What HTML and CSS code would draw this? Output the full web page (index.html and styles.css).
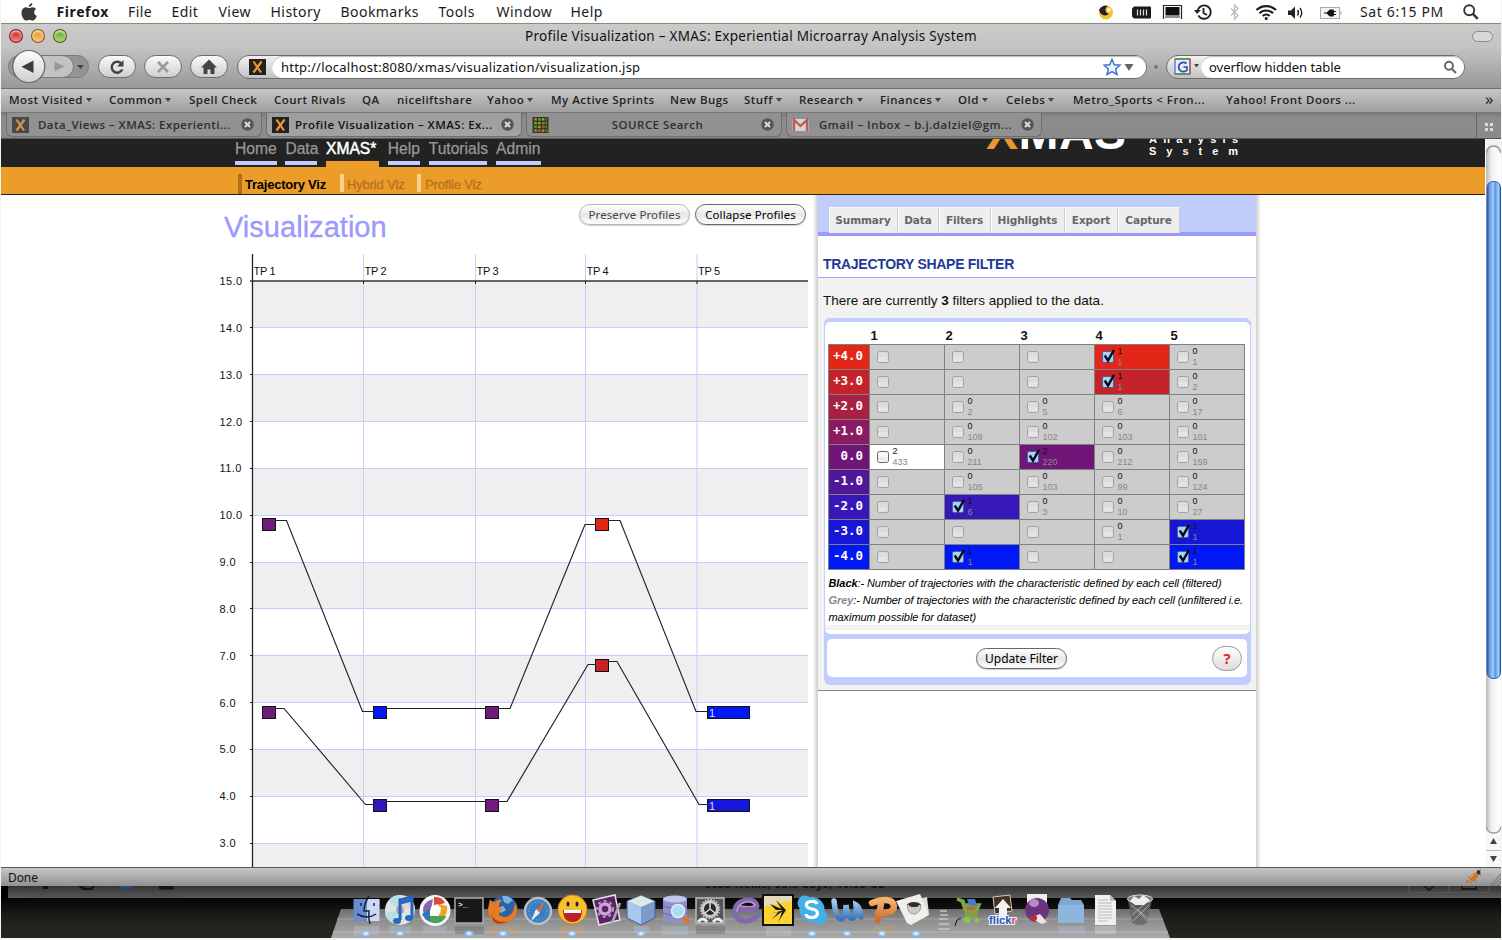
FILE: index.html
```html
<!DOCTYPE html>
<html lang="en">
<head>
<meta charset="utf-8">
<title>Profile Visualization – XMAS: Experiential Microarray Analysis System</title>
<link rel="stylesheet" href="styles.css">
</head>
<body>
<svg width="0" height="0" class="defs">
  <defs>
    <symbol id="closer" viewBox="0 0 13 13"><circle cx="6.5" cy="6.5" r="6.2" fill="#555"/><path d="M4 4l5 5M9 4l-5 5" stroke="#ddd" stroke-width="2"/></symbol>
    <symbol id="xicon" viewBox="0 0 17 16"><rect width="17" height="16" fill="#222"/><path d="M4.5 2.5l7.500 11M12.500 2.500l-8 11" stroke="#f0992a" stroke-width="2.200" fill="none"/></symbol>
    <symbol id="box" viewBox="0 0 18 16"><rect x="1.500" y="2.500" width="11" height="11" rx="2" fill="#dcdcdc" stroke="#a2a2a2"/><path d="M2.500 8h9v4.500h-9z" fill="#e4e4e4"/></symbol>
    <symbol id="boxon" viewBox="0 0 18 16"><rect x="1.500" y="2.500" width="11" height="11" rx="2" fill="#fafafa" stroke="#666"/><path d="M2.500 8h9v4.500h-9z" fill="#ececec"/></symbol>
    <symbol id="tick" viewBox="0 0 18 16"><rect x="1.500" y="2.500" width="11" height="11" rx="1.500" fill="#a9d0f5" stroke="#4463a0"/><path d="M3.800 6.500l3.200 5.200L13 .8" fill="none" stroke="#0a0a14" stroke-width="2.400"/></symbol>
  </defs>
</svg>
<div class="screen">
  <header class="menubar">
    <svg class="apple" viewBox="0 0 18 20"><path d="M12.300 1c.1 2-1.500 3.800-3.400 3.900C8.700 3 10.300 1.300 12.300 1zM9.200 6.100c.9 0 2-.9 3.400-.9 1.500 0 2.800.8 3.500 1.900-2.900 1.600-2.400 5.700.6 6.900-.7 2.200-2.200 4.600-4 4.600-1.200 0-1.700-.7-3.200-.7s-2 .7-3.200.7C4 18.600 1.500 14.800 1.500 11c0-3.500 2.200-5.700 4.500-5.700 1.400 0 2.300.8 3.200.8z" fill="#3a3a3a"/></svg>
    <nav class="menus"><b>Firefox</b><span>File</span><span>Edit</span><span>View</span><span>History</span><span>Bookmarks</span><span>Tools</span><span>Window</span><span>Help</span></nav>
    <svg class="tray" viewBox="1095 0 260 23"><circle cx="1107" cy="12.500" r="7" fill="#f6c233"/><path d="M1100 10a7 7 0 0 1 9-4c-4 2-3 7 1 8-4 3-9 1-10-4z" fill="#222"/><circle cx="1110" cy="10" r="2" fill="#fff3c0"/>
      <path d="M1135 6.500h16q1 0 1 1v10q0 1-1 1h-16l-2-2v-8z" fill="#1b1b1b"/><path d="M1138.500 9.500v6M1141.500 9.500v6M1144.500 9.500v6M1147.500 9.500v6" stroke="#ddd" stroke-width="1.200"/>
      <path d="M1164.500 19V5.500h18V19" fill="none" stroke="#222" stroke-width="1.200"/><rect x="1166.500" y="7" width="14" height="8.500" fill="#111"/><path d="M1166 17h15" stroke="#222"/>
      <path d="M1198.700 10a6.700 6.700 0 1 1 .6 5.500M1204.500 8v5l3.500 2" fill="none" stroke="#222" stroke-width="1.900"/><path d="M1195 10h7l-4 4z" fill="#222"/>
      <path d="M1232 8.500l7 7-3.500 3.500V5l3.500 3.500-7 7" fill="none" stroke="#bbb" stroke-width="1.300"/>
      <path d="M1257.500 10a14 14 0 0 1 19.500 0M1260.500 13.300a9.500 9.500 0 0 1 13.500 0M1263.700 16a5 5 0 0 1 7 0" fill="none" stroke="#1a1a1a" stroke-width="2.200"/><circle cx="1267.200" cy="18.500" r="1.500" fill="#111"/>
      <path d="M1289 10.500h3l4-4v12.500l-4-4h-3z" fill="#222"/><path d="M1298.500 10q1.800 2.700 0 5.500M1301 8q3.300 4.700 0 9.500" fill="none" stroke="#222" stroke-width="1.400"/>
      <rect x="1321.500" y="7.500" width="19" height="11" fill="#f4f4f4" stroke="#aaa"/><path d="M1342 11v4" stroke="#aaa"/><path d="M1325 13h4M1335 11h-1v-1h-3l-3 3 3 3h3v-1h1M1333 11.500h4M1333 14.500h4" fill="#111" stroke="#111" stroke-width="1.200"/></svg>
    <span class="clock">Sat 6:15 PM</span>
    <svg class="lens" viewBox="0 0 18 18"><circle cx="7.200" cy="7.200" r="5" fill="none" stroke="#333" stroke-width="1.900"/><path d="M10.800 10.800l5 5" stroke="#333" stroke-width="2.500"/></svg>
  </header>

  <section class="chrome">
    <div class="titlebar">
      <i class="light red"></i><i class="light amber"></i><i class="light green"></i>
      <span class="title">Profile Visualization – XMAS: Experiential Microarray Analysis System</span>
      <i class="toggle"></i>
    </div>
    <div class="toolbar">
      <svg class="backforward" viewBox="8 49 82 35"><defs><linearGradient id="gb" x2="0" y2="1"><stop offset="0" stop-color="#fff"/><stop offset="1" stop-color="#cfcfcf"/></linearGradient></defs>
        <rect x="8.500" y="55.500" width="80" height="22" rx="11" fill="#949494" stroke="#7a7a7a"/><rect x="30.500" y="55.500" width="43" height="22" rx="11" fill="#c3c3c3" stroke="#777"/><circle cx="28.800" cy="66.500" r="16" fill="url(#gb)" stroke="#666" stroke-width="1.200"/><path d="M33.500 60.500v12.500l-12-6.200z" fill="#3d3d3d"/><path d="M54.500 61.500v10l10-5z" fill="#999"/><path d="M77 65h7l-3.500 4z" fill="#444"/></svg>
      <span class="pill"><svg viewBox="0 0 18 18"><path d="M14.200 11.500a5.500 5.500 0 1 1-.5-5.500" fill="none" stroke="#444" stroke-width="2.400"/><path d="M15.500 2v6.500H9z" fill="#444"/></svg></span>
      <span class="pill"><svg viewBox="0 0 18 18"><path d="M4 4l10 10M14 4L4 14" stroke="#999" stroke-width="2.500"/></svg></span>
      <span class="pill"><svg viewBox="0 0 18 18"><path d="M9 1.500l8 8H14.500V16h-4v-4.500h-3V16h-4V9.500H1z" fill="#444"/></svg></span>
      <div class="field url"><svg class="ico"><use href="#xicon"/></svg><div class="inner"><span>http://localhost:8080/xmas/visualization/visualization.jsp</span><svg class="star" viewBox="0 0 32 18"><path d="M9 1.500l2.300 5.200 5.700.5-4.300 3.800 1.300 5.500L9 13.700l-5 2.800 1.300-5.500L1 7.200l5.700-.5z" fill="#eaf3ff" stroke="#3f72cc" stroke-width="1.500"/><path d="M21.500 6h9l-4.500 7z" fill="#666"/></svg></div></div>
      <i class="dot"></i>
      <div class="field search"><svg class="ico g" viewBox="0 0 26 17"><rect x="1" y="1" width="15" height="15" fill="#e9edf8" stroke="#5474c0" stroke-width="1.300"/><path d="M1 1h15M1 16h15" stroke="#4c9a3a" stroke-width="1.500"/><path d="M16 1v15" stroke="#c14f45" stroke-width="1.300"/><path d="M12.500 5.500A4.700 4.700 0 1 0 13 12V9H9.500" fill="none" stroke="#2a4fb5" stroke-width="1.700"/><path d="M20 6h5l-2.500 3.500z" fill="#444"/></svg><div class="inner"><span>overflow hidden table</span><svg class="mag" viewBox="0 0 14 14"><circle cx="6" cy="5.800" r="4" fill="none" stroke="#666" stroke-width="1.900"/><path d="M9 9l4 4" stroke="#666" stroke-width="2.200"/></svg></div></div>
    </div>
    <nav class="bookmarks"><span class="more">Most Visited</span><span class="more">Common</span><span>Spell Check</span><span>Court Rivals</span><span>QA</span><span>niceliftshare</span><span class="more">Yahoo</span><span>My Active Sprints</span><span>New Bugs</span><span class="more">Stuff</span><span class="more">Research</span><span class="more">Finances</span><span class="more">Old</span><span class="more">Celebs</span><span>Metro_Sports &lt; Fron...</span><span>Yahoo! Front Doors ...</span><span class="chev">»</span></nav>
    <div class="tabs">
      <div class="tab"><svg class="fav dim"><use href="#xicon"/></svg><span class="t1">Data_Views – XMAS: Experienti...</span><svg class="x"><use href="#closer"/></svg></div>
      <div class="tab active"><svg class="fav"><use href="#xicon"/></svg><span class="t2">Profile Visualization – XMAS: Ex...</span><svg class="x"><use href="#closer"/></svg></div>
      <div class="tab"><svg class="fav" viewBox="0 0 17 17"><rect width="17" height="17" fill="#333a22"/><path d="M2 2.500h13M2 6.500h13M2 10.500h13M2 14.500h13" stroke="#a7a13b" stroke-width="2.300" stroke-dasharray="2.500 1.500"/><path d="M6 2.500h3M2 10.500h3M10 6.500h3" stroke="#4d8a3b" stroke-width="2.500"/><path d="M6 14.500h3M10 10.500h3M14 14.500h2" stroke="#b5472f" stroke-width="2.500"/></svg><span class="t3">SOURCE Search</span><svg class="x"><use href="#closer"/></svg></div>
      <div class="tab"><svg class="fav" viewBox="0 0 17 14"><rect x=".5" y="1" width="16" height="12" fill="#d8d2d0"/><path d="M2 13V2l6.500 6L15 2v11" fill="none" stroke="#bd5b55" stroke-width="2.300"/></svg><span class="t4">Gmail – Inbox – b.j.dalziel@gm...</span><svg class="x"><use href="#closer"/></svg></div>
      <div class="tablist"><i></i><i></i><i></i><i></i></div>
    </div>
  </section>

  <main class="viewport">
    <div class="page">
      <div class="sitehead">
        <nav class="sitenav"><a>Home</a><a>Data</a><a class="on">XMAS*</a><a>Help</a><a>Tutorials</a><a>Admin</a></nav>
        <svg class="logo" viewBox="980 139 270 27"><g font-family="Liberation Sans, Arial, sans-serif" font-weight="bold"><text x="986" y="149" font-size="48" textLength="140" fill="#fff"><tspan fill="#e9992c">X</tspan>MAS</text><text x="1149" y="143" font-size="11" textLength="89" fill="#fff">Analysis</text><text x="1149" y="155" font-size="11" textLength="89" fill="#fff">System</text></g></svg>
      </div>
      <nav class="subnav"><a class="cur">Trajectory Viz</a><a>Hybrid Viz</a><a>Profile Viz</a></nav>
      <div class="body">
        <section class="viz">
          <div class="vizhead"><h1>Visualization</h1><div class="btns"><button class="btn off">Preserve Profiles</button><button class="btn">Collapse Profiles</button></div></div>
          <svg class="chart" viewBox="210 250 600 617">
            <g fill="#efefef"><path d="M252 281h556v46.500H252zM252 374.500h556v47H252zM252 468.500h556v47H252zM252 562h556v47H252zM252 656h556v46.500H252zM252 749.500h556v47H252zM252 843.500h556V867H252z"/></g>
            <path d="M252 327.500h556M252 374.500h556M252 421.500h556M252 468.500h556M252 515.500h556M252 562.500h556M252 608.500h556M252 655.500h556M252 702.500h556M252 749.500h556M252 796.500h556M252 843.500h556M363.500 254v613M475.500 254v613M585.500 254v613M697 254v613" stroke="#c3cffa" fill="none"/>
            <path d="M252.500 254v613" stroke="#222" stroke-width="1.300"/><path d="M250 281h558" stroke="#333" stroke-width="1.400"/>
            <path d="M363.500 281v3M475.500 281v3M585.500 281v3M697 281v3M250 327.500h3M250 374.500h3M250 421.500h3M250 468.500h3M250 515.500h3M250 562.500h3M250 608.500h3M250 655.500h3M250 702.500h3M250 749.500h3M250 796.500h3M250 843.500h3" stroke="#222"/>
            <g class="lab tp"><text x="253.500" y="275">TP 1</text><text x="364.500" y="275">TP 2</text><text x="476.500" y="275">TP 3</text><text x="586.500" y="275">TP 4</text><text x="698" y="275">TP 5</text></g>
            <g class="lab val"><text x="219.500" y="284.500">15.0</text><text x="219.500" y="331.500">14.0</text><text x="219.500" y="378.500">13.0</text><text x="219.500" y="425.500">12.0</text><text x="219.500" y="472">11.0</text><text x="219.500" y="519">10.0</text><text x="219.500" y="566">9.0</text><text x="219.500" y="612.500">8.0</text><text x="219.500" y="659.500">7.0</text><text x="219.500" y="706.500">6.0</text><text x="219.500" y="753">5.0</text><text x="219.500" y="800">4.0</text><text x="219.500" y="847">3.0</text></g>
            <g fill="none" stroke="#222" stroke-width="1.150"><path d="M275 520.500h11.500L362.500 711.500H374M387 708.500H510L585 524.500h11M608 520.500h12L696 711.500h12"/><path d="M275 708.500h9L365.500 804.500H374M387 801.500H507L588 664.500h8M608 661.500h9L699 804.500h9"/></g>
            <g stroke="#111"><rect x="262.500" y="518.500" width="13" height="12" fill="#701a7c"/><rect x="373.500" y="706.500" width="13" height="12" fill="#0018f5"/><rect x="485.500" y="706.500" width="13" height="12" fill="#701a7c"/><rect x="595.500" y="518.500" width="13" height="12" fill="#e32617"/><rect x="707.500" y="706.500" width="42" height="12" fill="#0018f5"/>
            <rect x="262.500" y="706.500" width="13" height="12" fill="#701a7c"/><rect x="373.500" y="799.500" width="13" height="12" fill="#3517b6"/><rect x="485.500" y="799.500" width="13" height="12" fill="#701a7c"/><rect x="595.500" y="659.500" width="13" height="12" fill="#c42329"/><rect x="707.500" y="799.500" width="42" height="12" fill="#1616dc"/></g>
            <g class="lab cnt"><text x="709" y="716.500">1</text><text x="709" y="809.500">1</text></g>
          </svg>
        </section>
        <aside class="panel">
          <nav class="ptabs"><a>Summary</a><a>Data</a><a>Filters</a><a>Highlights</a><a>Export</a><a>Capture</a></nav>
          <h2>TRAJECTORY SHAPE FILTER</h2>
          <div class="pbody">
            <p class="intro">There are currently <b>3</b> filters applied to the data.</p>
            <div class="fbox">
              <div class="fmain">
                <div class="cols"><b>1</b><b>2</b><b>3</b><b>4</b><b>5</b></div>
                <div class="grid">
                  <div class="r p4">+4.0</div><div class="c"><svg><use href="#box"/></svg></div><div class="c"><svg><use href="#box"/></svg></div><div class="c"><svg><use href="#box"/></svg></div><div class="c p4"><svg><use href="#tick"/></svg><p>1<i>1</i></p></div><div class="c"><svg><use href="#box"/></svg><p>0<i>1</i></p></div>
                  <div class="r p3">+3.0</div><div class="c"><svg><use href="#box"/></svg></div><div class="c"><svg><use href="#box"/></svg></div><div class="c"><svg><use href="#box"/></svg></div><div class="c p3"><svg><use href="#tick"/></svg><p>1<i>1</i></p></div><div class="c"><svg><use href="#box"/></svg><p>0<i>2</i></p></div>
                  <div class="r p2">+2.0</div><div class="c"><svg><use href="#box"/></svg></div><div class="c"><svg><use href="#box"/></svg><p>0<i>2</i></p></div><div class="c"><svg><use href="#box"/></svg><p>0<i>5</i></p></div><div class="c"><svg><use href="#box"/></svg><p>0<i>6</i></p></div><div class="c"><svg><use href="#box"/></svg><p>0<i>17</i></p></div>
                  <div class="r p1">+1.0</div><div class="c"><svg><use href="#box"/></svg></div><div class="c"><svg><use href="#box"/></svg><p>0<i>108</i></p></div><div class="c"><svg><use href="#box"/></svg><p>0<i>102</i></p></div><div class="c"><svg><use href="#box"/></svg><p>0<i>103</i></p></div><div class="c"><svg><use href="#box"/></svg><p>0<i>101</i></p></div>
                  <div class="r z0">0.0</div><div class="c open"><svg><use href="#boxon"/></svg><p>2<i>433</i></p></div><div class="c"><svg><use href="#box"/></svg><p>0<i>211</i></p></div><div class="c z0"><svg><use href="#tick"/></svg><p>2<i>220</i></p></div><div class="c"><svg><use href="#box"/></svg><p>0<i>212</i></p></div><div class="c"><svg><use href="#box"/></svg><p>0<i>159</i></p></div>
                  <div class="r m1">-1.0</div><div class="c"><svg><use href="#box"/></svg></div><div class="c"><svg><use href="#box"/></svg><p>0<i>105</i></p></div><div class="c"><svg><use href="#box"/></svg><p>0<i>103</i></p></div><div class="c"><svg><use href="#box"/></svg><p>0<i>99</i></p></div><div class="c"><svg><use href="#box"/></svg><p>0<i>124</i></p></div>
                  <div class="r m2">-2.0</div><div class="c"><svg><use href="#box"/></svg></div><div class="c m2"><svg><use href="#tick"/></svg><p>1<i>6</i></p></div><div class="c"><svg><use href="#box"/></svg><p>0<i>3</i></p></div><div class="c"><svg><use href="#box"/></svg><p>0<i>10</i></p></div><div class="c"><svg><use href="#box"/></svg><p>0<i>27</i></p></div>
                  <div class="r m3">-3.0</div><div class="c"><svg><use href="#box"/></svg></div><div class="c"><svg><use href="#box"/></svg></div><div class="c"><svg><use href="#box"/></svg></div><div class="c"><svg><use href="#box"/></svg><p>0<i>1</i></p></div><div class="c m3"><svg><use href="#tick"/></svg><p>1<i>1</i></p></div>
                  <div class="r m4">-4.0</div><div class="c"><svg><use href="#box"/></svg></div><div class="c m4"><svg><use href="#tick"/></svg><p>1<i>1</i></p></div><div class="c"><svg><use href="#box"/></svg></div><div class="c"><svg><use href="#box"/></svg></div><div class="c m4"><svg><use href="#tick"/></svg><p>1<i>1</i></p></div>
                </div>
                <div class="legend"><div class="l1"><b>Black</b>:- Number of trajectories with the characteristic defined by each cell (filtered)</div><div class="l2"><b>Grey</b>:- Number of trajectories with the characteristic defined by each cell (unfiltered i.e.</div><div class="l3">maximum possible for dataset)</div></div>
                <div class="strip"></div>
              </div>
              <div class="factions"><button class="btn upd">Update Filter</button><button class="help">?</button></div>
            </div>
          </div>
        </aside>
      </div>
    </div>
    <div class="scroll"><svg viewBox="0 0 15 728"><defs><linearGradient id="st"><stop offset="0" stop-color="#bbb"/><stop offset=".4" stop-color="#f3f3f3"/><stop offset="1" stop-color="#fff"/></linearGradient><linearGradient id="sb"><stop offset="0" stop-color="#2255b5"/><stop offset=".2" stop-color="#6a9ce8"/><stop offset=".45" stop-color="#a9cbf6"/><stop offset=".6" stop-color="#5595e6"/><stop offset=".85" stop-color="#9bd3fb"/><stop offset="1" stop-color="#3a70b8"/></linearGradient></defs><rect width="15" height="728" fill="url(#st)"/><path d="M0 0h15v14Q13 7 7.500 7T0 14z" fill="#f2f2f2"/><path d="M0 14Q2 7 7.500 7T15 14" fill="none" stroke="#999" stroke-width="1.500"/><rect x="1" y="42.500" width="13.500" height="497" rx="6" fill="url(#sb)" stroke="#2c5fb4"/><path d="M0 687q1 7 7.500 7t7.500-7v41H0z" fill="#f7f7f7"/><path d="M0 687q1 7 7.500 7t7.500-7" fill="none" stroke="#999" stroke-width="1.300"/><path d="M0 711.500h15" stroke="#bbb"/><path d="M7.500 699l3.500 6H4zM7.500 723l3.500-6H4z" fill="#444"/></svg></div>
  </main>
  <footer class="status"><span>Done</span><svg class="bug" viewBox="0 0 36 18"><path d="M3 9l4 1M1 14l4-2M6 15l1-3M10 14v-3M8 5l2 3" stroke="#666"/><ellipse cx="8.500" cy="9.500" rx="6" ry="3.500" transform="rotate(-42 8.500 9.500)" fill="#dd8a3a"/><path d="M5.500 12l6-5.500M7.500 13l5-5" stroke="#8d4a17" stroke-width=".8"/><path d="M12 3l4-1M14 6l2 1" stroke="#555"/><circle cx="13.500" cy="4.500" r="2" fill="#333"/><path d="M36 6L25 18M36 10l-8 8M36 14l-4 4" stroke="#666"/></svg></footer>
  <div class="behind"><svg viewBox="0 886 1500 12"><path d="M25 886v7q0 3 3 3h155v-10M65 886v6M105 886v6M146 886v6" fill="none" stroke="#444" stroke-width=".7"/><path d="M42 886h5v3h-5zM77 886h5l3 2h4l3-2h2l-3 4h-9zM158 886v2q0 1.500 2 1.500h11q2 0 2-1.500v-2" fill="#151515"/><path d="M118 886h15q-7 6-15 0z" fill="#234c80"/><path d="M1408 886v5q0 1.500 2 1.500h76q2 0 2-1.500v-5M1448 886v6" fill="none" stroke="#555"/><path d="M1423 886l5 4 5-4M1461 886v3h14v-3" fill="none" stroke="#191919" stroke-width="2"/><text x="704" y="888" font-family="Noto Sans, sans-serif" font-size="10" font-weight="bold" fill="#111" textLength="180">5038 items, 53.3 days, 40.53 GB</text></svg></div>
  <div class="desktop">
    <svg class="dock" viewBox="325 886 850 52">
      <defs>
        <linearGradient id="sh" x2="0" y2="1"><stop offset="0" stop-color="#6d6d6d"/><stop offset=".4" stop-color="#8e8e8e"/><stop offset="1" stop-color="#aaa"/></linearGradient>
        <radialGradient id="glow"><stop offset="0" stop-color="#fff"/><stop offset=".45" stop-color="#9fd0ff"/><stop offset="1" stop-color="#6fa9e8" stop-opacity="0"/></radialGradient>
        <linearGradient id="or" x2="0" y2="1"><stop offset="0" stop-color="#f7b36a"/><stop offset="1" stop-color="#cf6a2a"/></linearGradient>
        <linearGradient id="bl" x2="0" y2="1"><stop offset="0" stop-color="#a5cdf0"/><stop offset="1" stop-color="#3a74be"/></linearGradient>
        <ellipse id="lamp" cx="0" cy="933.500" rx="6" ry="4" fill="url(#glow)"/>
      </defs>
      <path d="M341 909H1159L1170 938H331z" fill="url(#sh)"/><path d="M337 919H1163" stroke="#a2a2a2"/><path d="M333 932H1168" stroke="#bababa"/>
      <g opacity=".3"><path d="M354 926h25v9h-25zM634 926h15v7h-15zM766 926h25v10h-25z" fill="#ccd"/><path d="M389 926h22v8h-22zM423 926h24v7h-24zM662 926h26v9h-26zM1058 926h27v8h-27z" fill="#b8c8e0"/><path d="M455 926h29v8h-29zM696 926h29v8h-29z" fill="#555"/><path d="M489 926h28v7h-28zM560 926h26v8h-26zM873 926h20v8h-20z" fill="#e0a060"/><path d="M1095 926h21v8h-21z" fill="#eee"/></g>
      <rect x="353.500" y="899" width="26" height="22" fill="#6b8bd0"/><path d="M367 899h12.500v22H367z" fill="#cdd9f2"/><path d="M369 896q-5 8-5 15h5q-1 7 1 13M357 914q10 6 19 0M361 903v3M374 903v3" fill="none" stroke="#17203a" stroke-width="1.500"/>
      <circle cx="400" cy="910" r="15" fill="#dce5e0"/><path d="M400 910L388 901q5-6 12-6zM400 910l-8 13q-7-5-7-10z" fill="#b9dfe3"/><path d="M400 910l15-2q-1-8-8-12z" fill="#e9d2cf"/><circle cx="400" cy="910" r="4" fill="#aaa"/><path d="M400 920V900l12-3v20" fill="none" stroke="#2464c4" stroke-width="3"/><path d="M400 903l12-3" stroke="#2464c4" stroke-width="3"/><ellipse cx="397" cy="921" rx="4" ry="3" fill="#2766c9"/><ellipse cx="409" cy="918" rx="4" ry="3" fill="#2766c9"/>
      <circle cx="435" cy="910.500" r="15.500" fill="#f8f6f4"/><path d="M433 899l-2 11-7 5q-4-12 9-16z" fill="#8768ae"/><path d="M434 897q8-1 11 6l-11 3z" fill="#dd4a3c"/><path d="M439 904l8 2q1 7-3 11l-5-1z" fill="#f0a425"/><path d="M446 917q-6 9-16 5v-6h16z" fill="#4aa453"/><path d="M422 914l8-5v13q-6-3-8-8z" fill="#2b78b6"/><path d="M431 907l6-3 4 4-1 6-7 2-3-4z" fill="#fff"/>
      <rect x="455" y="898" width="28" height="25" fill="#181818" stroke="#aaa" stroke-width="1.500"/><text x="458" y="907" fill="#ddd" font-family="Liberation Mono" font-size="8" font-weight="bold">&gt;_</text>
      <circle cx="504" cy="909" r="13.500" fill="#2e62a5"/><path d="M502 896q7-1 11 4l-5 4-4-2zM497 908l6-2 3 4-5 3z" fill="#7cb4e4"/><path d="M490 899q2 4 5 3 3-3 7-2-4 4-3 7l4 2q-4 2-4 6 7 5 13-2 2-3 3-10 5 8-1 15-7 8-17 5-10-4-9-14z" fill="#e77a22"/><path d="M490 913q6 12 19 8-9 5-15 1z" fill="#b83a16"/>
      <circle cx="538" cy="911" r="13" fill="#3b7ebf" stroke="#b9bec3" stroke-width="2.500"/><circle cx="538" cy="911" r="9" fill="none" stroke="#a5cbe9" stroke-dasharray="1 2"/><path d="M545 901l-5 12-4-3z" fill="#d96749"/><path d="M531 921l5-12 4 4z" fill="#e9eef3"/>
      <circle cx="572.500" cy="909.500" r="14.500" fill="#f6c02d" stroke="#d2871b"/><path d="M563 910h19q0 12-9.500 12t-9.500-12z" fill="#b8232a"/><path d="M564 910h17v3h-17z" fill="#fff"/><ellipse cx="568" cy="904" rx="1.500" ry="2.500" fill="#223"/><ellipse cx="577" cy="904" rx="1.500" ry="2.500" fill="#223"/>
      <path d="M593 900l22-5 5 25-21 5z" fill="#5a2462" stroke="#e9dff0" stroke-width="1.500"/><circle cx="605" cy="909" r="5" fill="none" stroke="#c9a7d4" stroke-width="3.500"/><circle cx="605" cy="909" r="8" fill="none" stroke="#b892c4" stroke-width="2" stroke-dasharray="3 3"/><path d="M620 903l-8 20" stroke="#aaa" stroke-width="2.500"/>
      <path d="M641 895l14 6v17l-14 7-14-7v-17z" fill="#7b9acb"/><path d="M641 895l14 6-14 6-14-6z" fill="#dbece8"/><path d="M627 901l14 6v18l-14-7z" fill="#a9c7ea"/><path d="M641 895l14 6v17l-14 7-14-7v-17z" fill="none" stroke="#475c8a"/>
      <path d="M663 899v21q12 6 24 0v-21z" fill="#8e90cc"/><ellipse cx="675" cy="899" rx="12" ry="3.500" fill="#c3c5ed"/><path d="M663 906q12 5 24 0M663 913q12 5 24 0" fill="none" stroke="#666aa8"/><path d="M683 917l6 6" stroke="#e2732d" stroke-width="4"/><circle cx="678" cy="911" r="6.500" fill="#a9dcf4" stroke="#e6edf5" stroke-width="1.500"/>
      <rect x="696" y="898" width="28" height="25" fill="#555" stroke="#bbb" stroke-width="1.500"/><circle cx="710" cy="909" r="7.500" fill="#2b2b2b" stroke="#ccc" stroke-width="3"/><circle cx="710" cy="909" r="9.500" fill="none" stroke="#ccc" stroke-width="1.500" stroke-dasharray="1.500 1.500"/><path d="M710 903v6l5 4M710 909l-5 4" stroke="#ddd" stroke-width="1.500" fill="none"/><path d="M698 922q5-6 9 0M713 922q5-6 9 0" stroke="#eee" stroke-width="3" fill="none"/>
      <path d="M740 909q17 3 17-3-2-7-11-6-12 3-11 13 2 9 12 8 6-1 11-5" fill="none" stroke="#8468ab" stroke-width="5" stroke-linecap="round"/><path d="M740 906q13 2 15-1-3-4-9-3-9 2-9 10" fill="none" stroke="#b79bd3" stroke-width="1.500"/>
      <rect x="763" y="895" width="30" height="30" fill="#fbd22f" stroke="#111" stroke-width="2"/><path d="M764 896h28v5q-14 2-28 6z" fill="#ddd" opacity=".8"/><path d="M776 900l10 10-8 12q4-8 4-12zM770 904l14 6-8 0zM770 914l14-4-12 9q6-6 6-7z" fill="#1b1b1b"/>
      <circle cx="812" cy="909.500" r="12.500" fill="#45b0e8"/><circle cx="805" cy="903" r="7.500" fill="#45b0e8"/><circle cx="820" cy="917" r="7.500" fill="#45b0e8"/><path d="M817 904q-1-3-6-2.500t-4.500 3.500q0 3 5.500 4 5.500 1 5.500 4.500-.5 4-6 4-5 0-5.500-3.500" fill="none" stroke="#fff" stroke-width="3.200"/>
      <path d="M834 901q2 19 8 18 4-2 4-14 2 15 7 13 4-3 3-13 4 2 5 12" fill="none" stroke="url(#bl)" stroke-width="5.500" stroke-linecap="round"/>
      <path d="M872 903q20-7 22 3 0 8-16 7M881 904l-3 16" fill="none" stroke="url(#or)" stroke-width="6.500" stroke-linecap="round"/>
      <path d="M905 902l22-5 2 17-21 9z" fill="#ddd"/><path d="M892 901l24-7 9 21-18 10-4-2z" transform="translate(4 0)" fill="#f0f0eb"/><ellipse cx="914" cy="905" rx="7" ry="3" fill="#493c30"/><path d="M907 905q1 10 8 9 6-2 6-9" fill="#ccc" stroke="#999"/><ellipse cx="914" cy="905" rx="5" ry="2" fill="#3b2a22"/>
      <path d="M940 911h7M940 915h8M939 919h9M939 924h10M938 929h12" stroke="#c5c5c5" stroke-width="1.500"/>
      <path d="M957 899l6 1 2 5h15l-4 11h-11l-4-13" fill="#c0683c"/><path d="M957 899l6 2 4 15h10M963 905h16l-3 7h-11" fill="none" stroke="#78a648" stroke-width="3.500"/><path d="M967 899h8l2 7h-8z" fill="#4c7db9"/><circle cx="967" cy="920" r="3.500" fill="#8fc24a"/><circle cx="977" cy="920" r="2.500" fill="#8fc24a"/><path d="M955 926l2-6 4-2" stroke="#111" fill="none"/>
      <path d="M993 897l17-2 2 16-17 3z" fill="#46331f" stroke="#ccc"/><path d="M1003 899l8 9h-4v12h-8v-12h-4z" fill="#f3f3f3"/><text x="989" y="924" font-family="Liberation Sans" font-size="11" font-weight="bold" textLength="27" lengthAdjust="spacingAndGlyphs" fill="#1f5fb0" stroke="#eef" stroke-width="2" paint-order="stroke">flick<tspan fill="#e33a86">r</tspan></text>
      <rect x="1027" y="894" width="20" height="14" fill="#eee"/><circle cx="1037" cy="910" r="12" fill="#6b3480"/><ellipse cx="1034" cy="903" rx="5" ry="4" fill="#b88bc5"/><path d="M1030 918l10-4 7 8-5 2z" fill="#ece4e4"/><circle cx="1034" cy="918" r="3" fill="#c52930"/>
      <path d="M1058 905l3-7h9l2 2h9l3 5v18h-26z" fill="#7ca7cf"/><path d="M1058 905h26v18h-26z" fill="#8db6dc"/>
      <path d="M1095 895h15l6 6v24h-21z" fill="#f0f0ee"/><path d="M1098 900h10M1098 903h14M1098 906h14M1098 909h14M1098 912h14M1098 915h14M1098 918h14M1098 921h10" stroke="#bbb"/><path d="M1110 895v6h6z" fill="#bbb"/>
      <path d="M1128 899l4 24q8 4 15 0l5-24z" fill="#666" opacity=".85"/><path d="M1131 905l18 14M1132 915l14-12M1149 905l-16 16M1147 921l-10-12" stroke="#aaa"/><ellipse cx="1140" cy="899" rx="12.500" ry="4" fill="#777" stroke="#ddd"/><path d="M1130 901l4-5 5 3 4-4 7 5-6 5h-9z" fill="#eee"/>
      <g><use href="#lamp" x="366"/><use href="#lamp" x="400"/><use href="#lamp" x="469"/><use href="#lamp" x="503"/><use href="#lamp" x="572"/><use href="#lamp" x="641"/><use href="#lamp" x="812"/><use href="#lamp" x="847"/><use href="#lamp" x="882"/><use href="#lamp" x="916"/></g>
    </svg>
  </div>
</div>
</body>
</html>
```
FILE: styles.css
```css
* { box-sizing: border-box; }
body { margin: 0; width: 1502px; height: 940px; overflow: hidden; background: #f4f4f4; font-family: "Open Sans", "Noto Sans", sans-serif; color: #111; }
p, h1, h2 { margin: 0; font-weight: normal; }
svg { display: block; flex: none; }
.defs { position: absolute; }
.screen { width: 1500px; height: 938px; margin-left: 1px; display: flex; flex-direction: column; position: relative; }

.menubar { height: 24px; flex: none; background: linear-gradient(#fff 70%, #f6fbf0); border-bottom: 1px solid #868c84; display: flex; align-items: center; font: 14px/23px "Noto Sans", sans-serif; letter-spacing: .45px; color: #1a1a1a; }
.apple { width: 18px; height: 20px; margin-left: 19px; }
.menus { display: grid; grid-template-columns: 71.5px 43.5px 47px 52px 70px 98px 58px 74px 40px; margin-left: 18.5px; width: 1037.5px; white-space: nowrap; }
.menus b { font-weight: 700; letter-spacing: .6px; }
.tray { width: 260px; height: 23px; }
.clock { width: 102px; padding-left: 6px; letter-spacing: .65px; white-space: nowrap; }
.lens { width: 18px; height: 18px; margin-left: 6px; }

.chrome { flex: none; height: 115px; background: linear-gradient(#cbcbcb, #c4c4c4 20%, #969696 57%); }
.titlebar { height: 24px; display: flex; align-items: center; padding-left: 8px; gap: 8px; position: relative; }
.light { width: 14px; height: 14px; border-radius: 50%; border: 1px solid rgba(60,20,10,.55); box-shadow: inset 0 3px 2px -1px rgba(255,255,255,.65), inset 0 -4px 4px rgba(255,255,255,.4); }
.red { background: #d6332e; } .amber { background: #eda02d; } .green { background: #6fb52c; }
.title { margin-left: 450px; width: 456px; font: 13.500px/24px "Noto Sans", sans-serif; letter-spacing: .28px; white-space: nowrap; }
.toggle { margin: 0 8px 0 auto; width: 21px; height: 11px; border-radius: 6px; border: 1.500px solid #8a8a8a; background: #d8d8d8; }
.toolbar { height: 41px; padding-left: 7px; display: flex; align-items: center; padding-bottom: 3px; border-bottom: 1px solid #6f6f6f; }
.backforward { width: 82px; height: 35px; margin-right: 1px; }
.pill { width: 38px; height: 23px; margin-left: 8px; border: 1px solid #6c6c6c; border-radius: 12px; background: linear-gradient(#fafafa, #cecece); display: flex; justify-content: center; align-items: center; }
.backforward + .pill { margin-left: 7px; }
.pill svg { width: 18px; height: 18px; }
.field { height: 24px; border: 1px solid #6c6c6c; border-radius: 12px; background: linear-gradient(#f2f2f2, #c2c2c2); display: flex; align-items: center; margin-left: 9px; }
.field .inner { flex: 1; height: 22px; margin-left: auto; background: #fff; border-radius: 11px; box-shadow: inset 0 1px 1px #bbb; display: flex; align-items: center; justify-content: space-between; font: 13px/22px "Noto Sans", sans-serif; padding-left: 9px; }
.url { width: 910px; }
.url .ico { width: 17px; height: 16px; margin: 0 6px 0 11px; }
.url .inner span { letter-spacing: .23px; }
.star { width: 32px; height: 18px; margin-right: 11px; }
.dot { width: 4px; height: 4px; border-radius: 2px; background: #777; margin: 0 8px 0 7px; }
.search { width: 299px; margin-left: 0; }
.search .ico { width: 26px; height: 17px; margin: 0 1px 0 7px; }
.search .inner span { letter-spacing: -.04px; }
.search .inner { padding-left: 8px; }
.mag { width: 14px; height: 14px; margin-right: 7px; }

.bookmarks { height: 23px; background: linear-gradient(#c8c8c8, #9e9e9e); display: grid; grid-template-columns: 100px 80px 85px 88px 35px 90px 64px 119px 74px 55px 81px 78px 48px 67px 153px 259px 14px; padding-left: 8px; font-size: 11.500px; font-weight: 600; line-height: 22px; color: #222; white-space: nowrap; letter-spacing: .47px; }
.more::after { content: ""; display: inline-block; margin-left: 3px; vertical-align: 2px; border: 3.500px solid transparent; border-top: 4px solid #444; border-bottom: 0; }
.chev { font-size: 17px; font-weight: 400; line-height: 19px; }
.tabs { height: 27px; background: linear-gradient(#7b7b7b, #8c8c8c 20%, #8a8a8a); border-top: 1px solid #777; border-bottom: 1px solid #555; display: flex; gap: 4px; padding-left: 5px; }
.tab { width: 256px; height: 24px; border: 1px solid #6e6e6e; border-top: 0; border-radius: 0 0 6px 6px; background: #919191; display: flex; align-items: center; font-size: 11.500px; font-weight: 600; color: #2e2e2e; white-space: nowrap; padding-left: 5px; letter-spacing: .44px; }
.active { background: linear-gradient(#9e9e9e, #a2a2a2); color: #111; }
.fav { width: 17px; height: 16px; }
.dim { opacity: .65; }
.tab span { margin-left: 9px; width: 195px; }
.tab .t2 { margin-left: 6px; width: 199px; letter-spacing: .46px; }
.tab .t3 { text-align: center; width: 195px; margin-left: 11px; }
.tab .t4 { margin-left: 10px; letter-spacing: .5px; }
.x { width: 13px; height: 13px; margin-left: auto; margin-right: 7px; }
.tablist { margin-left: auto; width: 25px; border-left: 1px solid #666; display: grid; grid-template-columns: 3px 3px; grid-auto-rows: 3px; gap: 2px; padding: 10px 0 0 8px; }
.tablist i { background: #ddd; }

.viewport { flex: none; height: 728px; display: flex; background: #fff; border-bottom: 0; }
.page { width: 1484px; display: flex; flex-direction: column; font-family: "Liberation Sans", Arial, sans-serif; }
.scroll { width: 15px; margin-left: 1px; height: 728px; }
.scroll svg { width: 15px; height: 728px; }
.sitehead { height: 28px; background: #222; display: flex; flex: none; }
.sitenav { display: grid; grid-template-columns: 41.7px 32px 53px 32.3px 58.7px 45px; column-gap: 8.700px; margin-left: 234px; width: 746px; color: #999; font-size: 15.600px; white-space: nowrap; -webkit-text-stroke: .25px #999; }
.sitenav a { height: 26px; line-height: 19px; border-bottom: 4px solid #c1cdfd; }
.sitenav .on { height: 28px; color: #fff; -webkit-text-stroke: .5px #fff; border-bottom: 6px solid #ee9e28; }
.logo { width: 270px; height: 27px; margin-left: -1px; }
.subnav { height: 28px; flex: none; background: #ec9c28; border-bottom: 1px solid #222; display: grid; grid-template-columns: 102px 77px 100px; padding: 7px 0 0 237px; font-size: 13px; color: #b57220; }
.subnav a { border-left: 4px solid #fad08e; padding-left: 3px; line-height: 21px; height: 18px; letter-spacing: -.15px; -webkit-text-stroke: .3px #b57220; }
.subnav a:last-child { padding-left: 4px; }
.subnav .cur { color: #000; font-weight: bold; border-color: #b26f15; height: 20px; letter-spacing: -.24px; -webkit-text-stroke: 0; }
.body { display: flex; flex: 1; }
.viz { width: 812px; margin-right: 0; }
.vizhead { height: 55px; display: flex; justify-content: space-between; padding: 8px 7px 0 223px; }
h1 { color: #9999ff; font-size: 29px; line-height: 49px; letter-spacing: .03px; -webkit-text-stroke: .3px #9999ff; }
.btns { display: flex; gap: 5px; }
.btn { height: 21px; width: 111px; padding: 0; border: 1.500px solid #666; border-radius: 11px; background: linear-gradient(#fff, #e7e7e7 50%, #fcfcfc); font: 11.500px/17px "Noto Sans", sans-serif; letter-spacing: .1px; color: #000; box-shadow: 0 1px 1px #ccc; margin-top: 1px; white-space: nowrap; }
.btn.off { border-color: #b5b5b5; color: #444; }
.chart { width: 600px; height: 617px; margin-left: 209px; }
.lab { font: 11px "Liberation Sans", Arial, sans-serif; fill: #111; }
.tp { letter-spacing: -.3px; }
.val { letter-spacing: .4px; }
.cnt { fill: #ddd; }

.panel { width: 448px; padding: 0 5px; background: linear-gradient(90deg, #fafafa 0, #ccc 5px, #fff 5px, #fff 443px, #cfcfcf 443px, #fdfdfd 448px); }
.ptabs { height: 41px; background: #c1cdfd; border-bottom: 4px solid #9999ff; display: grid; grid-template-columns: 69px 41px 52px 74px 53px 62px; padding: 12px 0 0 10.500px; font: bold 10.500px/25px "DejaVu Sans", sans-serif; color: #666; text-align: center; }
.ptabs a { background: #eee; border-right: 1px solid #ccc; border-left: 1px solid #fff; border-top: 1px solid #f8f8f8; letter-spacing: -.1px; }
h2 { height: 42px; font-size: 14px; font-weight: bold; color: #1d3a98; padding: 20px 0 0 5px; line-height: 16px; border-bottom: 1px solid #9d9dff; white-space: nowrap; letter-spacing: -.3px; }
.pbody { background: #f2f2f2; height: 413px; padding: 13px 5px 0; border-bottom: 1px solid #888; }
.intro { font-size: 13.500px; line-height: 20px; white-space: nowrap; height: 27px; letter-spacing: .02px; }
.fbox { margin: 0 0 0 1px; width: 427px; height: 367px; background: #c1cdfd; border-radius: 6px; padding: 4px 1px 0; }
.fmain { background: #fff; height: 312px; border-radius: 5px; border: 0 solid #e0e6fe; }
.cols { height: 22px; display: grid; grid-template-columns: repeat(5, 75px); padding-left: 45.500px; font-size: 13px; line-height: 27px; }
.grid { margin-left: 3px; width: 417px; padding: 1px; background: #808080; display: grid; grid-template-columns: 40px repeat(5, 74px); grid-auto-rows: 24px; gap: 1px; }
.r { color: #fff; font: bold 12.500px/22px "DejaVu Sans Mono", monospace; text-align: right; padding-right: 6px; }
.c { background: #ccc; display: flex; padding: 3px 0 0 6px; }
.c svg { width: 18px; height: 16px; margin-top: 1px; }
.c p { font-size: 9px; line-height: 12px; margin: -3px 0 0 -1.500px; color: #111; }
.c i { display: block; font-style: normal; color: #888; line-height: 11px; }
.open { background: #fff; }
.p4 { background: #e32617; } .p3 { background: #c42329; } .p2 { background: #a92045; } .p1 { background: #8b1b60; } .z0 { background: #701679; }
.m1 { background: #521699; } .m2 { background: #3617b8; } .m3 { background: #1616d4; } .m4 { background: #0018f5; }
.legend { font-size: 11px; font-style: italic; line-height: 17px; height: 55px; padding: 5px 0 0 3.500px; white-space: nowrap; letter-spacing: -.08px; color: #000; }
.l2 b { color: #888; }
.strip { height: 5px; background: #f3f3f3; }
.factions { height: 38px; margin: 5px 3px 0 2px; background: #fff; border-radius: 5px; display: flex; align-items: center; padding: 0 5px 0 149px; }
.btn.upd { width: 91px; margin: 0 auto 0 0; font-size: 12px; letter-spacing: 0; }
.help { width: 30px; height: 25px; border: 1px solid #999; border-radius: 13px; background: linear-gradient(#fff, #ddd); color: #e22; font: bold 15px/20px "Noto Sans", sans-serif; padding: 0; }

.status { height: 19px; flex: none; border-top: 1px solid #555; background: linear-gradient(#c6c6c6, #919191); display: flex; justify-content: space-between; padding-left: 7px; font: 12px/19px "Noto Sans", sans-serif; letter-spacing: -.1px; }
.bug { width: 36px; height: 18px; }
.behind { height: 12px; flex: none; background: linear-gradient(90deg, #000 7px, transparent 7px), linear-gradient(#333, #5b5b5b); }
.behind svg { width: 1500px; height: 12px; }
.desktop { height: 40px; flex: none; background: radial-gradient(ellipse at 15% 80%, #24261f, transparent 25%), linear-gradient(#050505, #1b1c18 45%, #25261f); display: flex; align-items: flex-end; padding-left: 324px; }
.dock { width: 850px; height: 52px; position: relative; }
```
